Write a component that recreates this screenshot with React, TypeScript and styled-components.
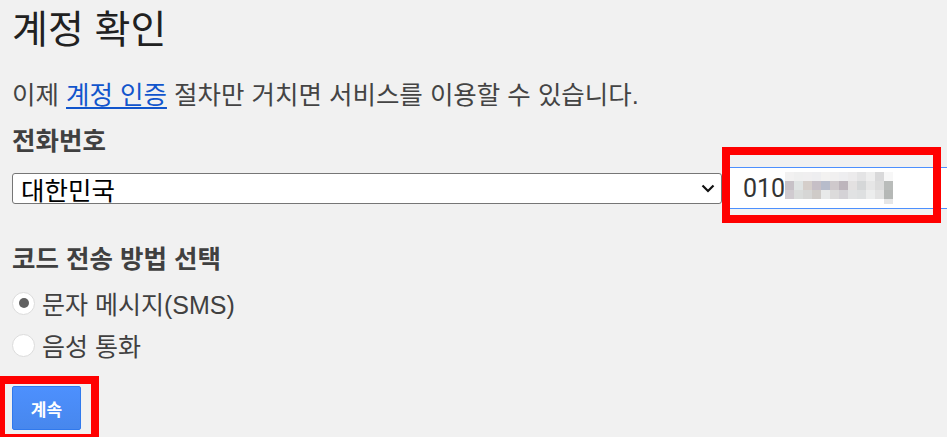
import styled, { createGlobalStyle } from "styled-components";

const GlobalStyle = createGlobalStyle`
  html, body {
    margin: 0;
    padding: 0;
    background: #f1f1f1;
    overflow: hidden;
  }
  body {
    font-family: "Liberation Sans", "Noto Sans CJK KR", Arial, sans-serif;
  }
`;

const mosaic = [
  ["#f2f1f1", "#efefef", "#f0eff0", "#eeeef0", "#f3f2f1", "#f1f0f0", "#eeeef0", "#ecebec", "#e4e4e5", "#eeeeee", "#d9d9da", "#f7f7f7"],
  ["#c7c1c7", "#dfe3e3", "#d5ceca", "#c6bfc6", "#b7bccb", "#cfc9cc", "#bdb5bc", "#e3e1e1", "#d5d7d8", "#e6e6e6", "#dcdcdc", "#b9bcba"],
  ["#d0cbd0", "#dadcdb", "#d6d6d5", "#cfcbc8", "#e8e9e9", "#dcdbdb", "#d4d2d6", "#e1e2e3", "#dee0e1", "#eceded", "#e2e2e2", "#b5b8b6"],
  ["#ffffff", "#ffffff", "#ffffff", "#ffffff", "#ffffff", "#ffffff", "#ffffff", "#ffffff", "#ffffff", "#ffffff", "#ffffff", "#e6e6e6"],
];

const methods = [
  { label: "문자 메시지(SMS)", checked: true },
  { label: "음성 통화", checked: false },
];

const App = () => {
  return (
    <Page>
      <GlobalStyle />
      <Title>계정 확인</Title>
      <Intro>
        이제 <IntroLink href="#">계정 인증</IntroLink> 절차만 거치면 서비스를
        이용할 수 있습니다.
      </Intro>

      <Label>전화번호</Label>
      <PhoneRow>
        <CountrySelect>
          <span>대한민국</span>
          <svg width="14" height="9" viewBox="0 0 14 9">
            <polyline
              points="1.5,1.5 7,7 12.5,1.5"
              fill="none"
              stroke="#111"
              strokeWidth="2.2"
            />
          </svg>
        </CountrySelect>
        <PhoneInput>
          <PhoneDigits>010</PhoneDigits>
          <svg width="108" height="32" viewBox="0 0 108 32">
            {mosaic.map((row, r) =>
              row.map((c, i) => (
                <rect key={`${r}-${i}`} x={i * 9} y={r * 9} width="9" height={r === 3 ? 5 : 9} fill={c} />
              ))
            )}
          </svg>
        </PhoneInput>
      </PhoneRow>

      <SectionLabel>코드 전송 방법 선택</SectionLabel>
      <RadioList>
        {methods.map((m) => (
          <RadioRow key={m.label}>
            <RadioCircle $checked={m.checked} />
            <span>{m.label}</span>
          </RadioRow>
        ))}
      </RadioList>

      <ContinueButton>계속</ContinueButton>

      <Highlight $left={722} $top={147} $width={219} $height={76} />
      <Highlight $left={-3} $top={376} $width={102} $height={66} />
    </Page>
  );
};

export default App;

const Page = styled.div`
  position: relative;
  width: 947px;
  height: 437px;
  padding: 10px 0 0 12px;
  box-sizing: border-box;
  color: #444;
  overflow: hidden;
`;

const Title = styled.h1`
  margin: 0;
  color: #212121;
  font-size: 39px;
  font-weight: 400;
  line-height: 40px;
`;

const Intro = styled.p`
  margin: 30px 0 0;
  font-size: 25.5px;
  line-height: 30px;
  color: #444;
  white-space: nowrap;
`;

const IntroLink = styled.a`
  color: #15c;
  text-decoration: underline;
  text-underline-offset: 3px;
`;

const Label = styled.div`
  margin-top: 16px;
  font-size: 25.5px;
  font-weight: 700;
  line-height: 30px;
  color: #404040;
`;

const PhoneRow = styled.div`
  margin-top: 11px;
  display: flex;
  align-items: center;
  gap: 6px;
`;

const CountrySelect = styled.div`
  width: 710px;
  height: 31px;
  flex-shrink: 0;
  box-sizing: border-box;
  border: 1px solid #767676;
  border-radius: 3px;
  background: #fff;
  display: flex;
  align-items: center;
  justify-content: space-between;
  padding: 0 6px 0 8px;
  font-size: 25.5px;
  color: #000;

  svg {
    margin-top: 1px;
  }
`;

const PhoneInput = styled.div`
  width: 320px;
  height: 42px;
  flex-shrink: 0;
  box-sizing: border-box;
  border: 1px solid #4d90fe;
  background: #fff;
  display: flex;
  align-items: center;
  padding-left: 14px;
`;

const PhoneDigits = styled.span`
  font-family: Roboto, "Liberation Sans", sans-serif;
  font-size: 25px;
  color: #333;
`;

const SectionLabel = styled(Label)`
  margin-top: 35px;
`;

const RadioList = styled.div`
  margin-top: 8px;
  display: flex;
  flex-direction: column;
`;

const RadioRow = styled.label`
  height: 42px;
  display: flex;
  align-items: center;
  gap: 7px;
  font-size: 25px;
  color: #404040;
`;

const RadioCircle = styled.span<{ $checked: boolean }>`
  width: 21px;
  height: 21px;
  flex-shrink: 0;
  border-radius: 50%;
  border: 1px solid #dcdcdc;
  background: #fff;
  display: flex;
  align-items: center;
  justify-content: center;

  &::after {
    content: "";
    display: ${(p) => (p.$checked ? "block" : "none")};
    width: 10px;
    height: 10px;
    border-radius: 50%;
    background: #606060;
  }
`;

const ContinueButton = styled.button`
  margin-top: 20px;
  width: 69px;
  height: 44px;
  border: 1px solid #3079ed;
  border-radius: 2px;
  background: linear-gradient(#4d90fe, #4787ed);
  color: #fff;
  font-family: "Liberation Sans", "Noto Sans CJK KR", sans-serif;
  font-size: 17px;
  font-weight: 700;
  padding: 0;
`;

const Highlight = styled.div<{ $left: number; $top: number; $width: number; $height: number }>`
  position: absolute;
  left: ${(p) => p.$left}px;
  top: ${(p) => p.$top}px;
  width: ${(p) => p.$width}px;
  height: ${(p) => p.$height}px;
  box-sizing: border-box;
  border: 8px solid #ff0000;
  pointer-events: none;
`;
